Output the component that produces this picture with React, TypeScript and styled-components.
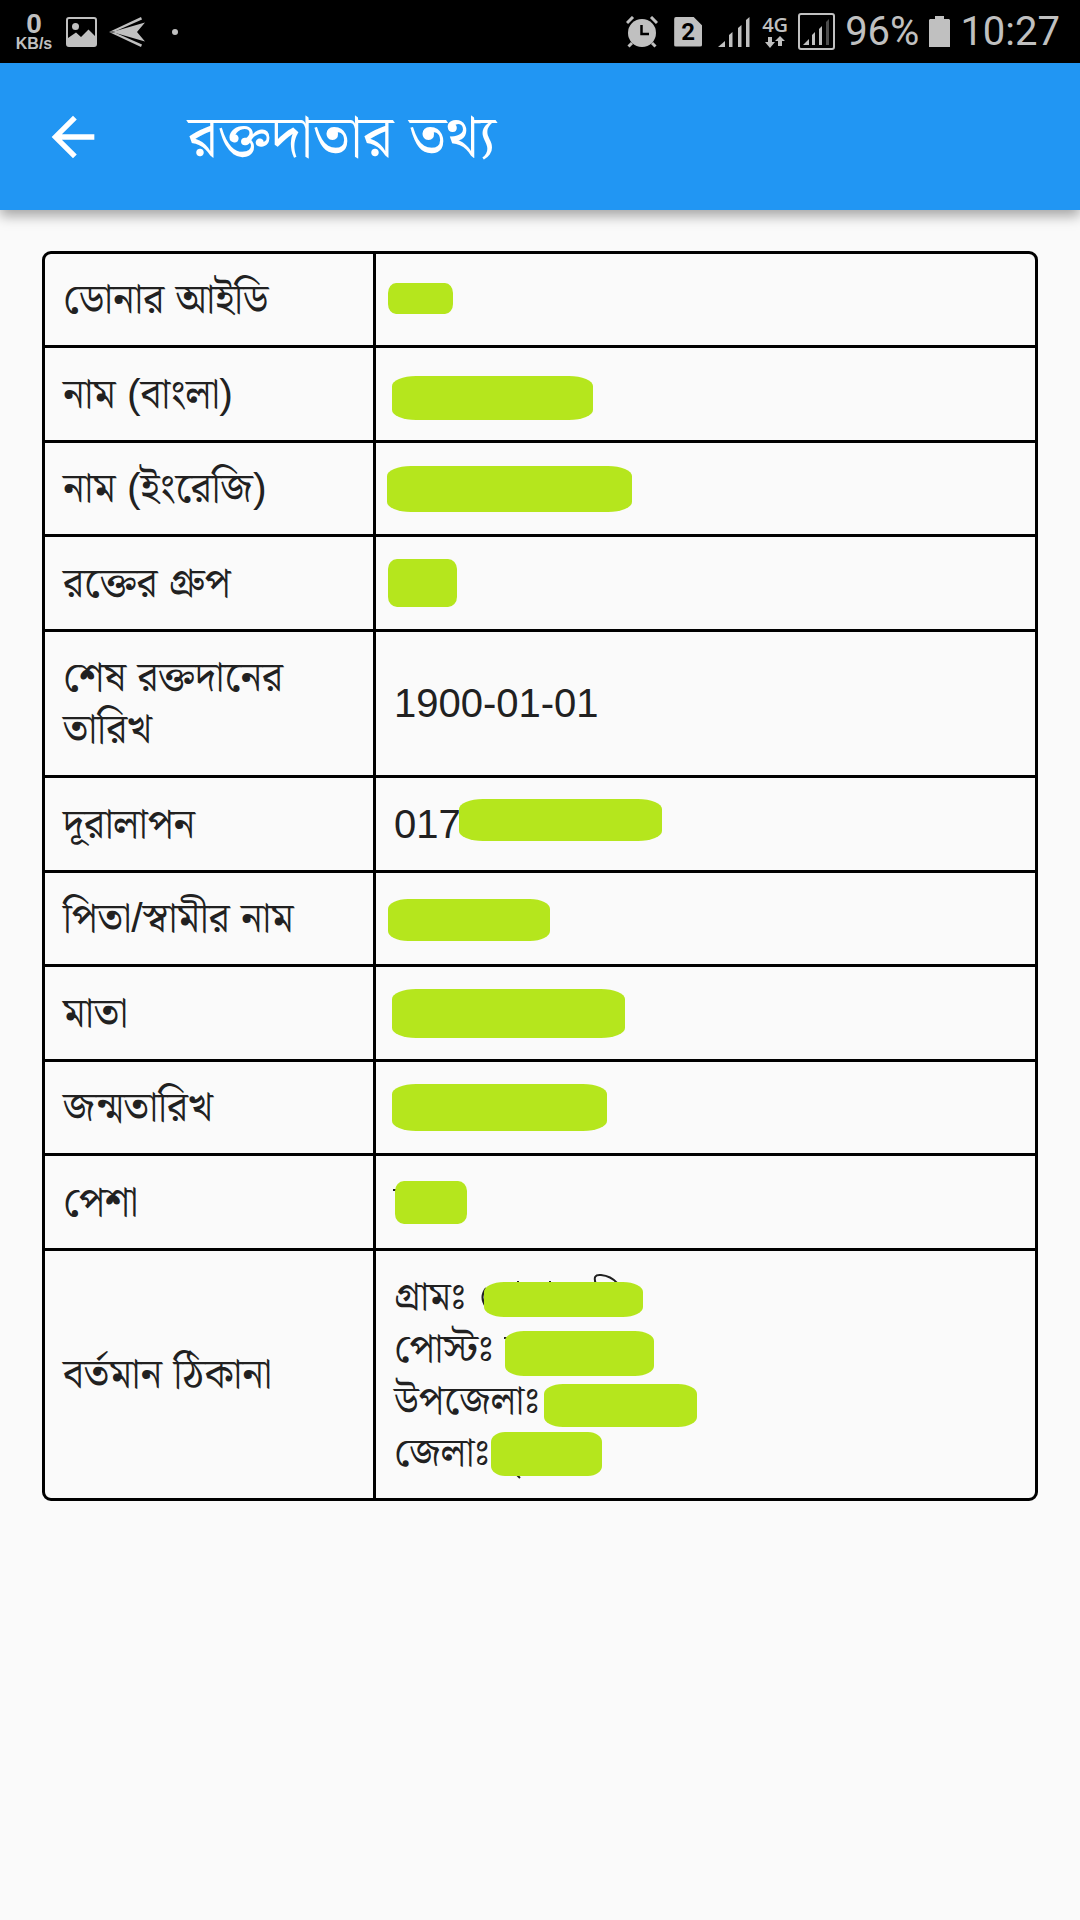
import React from "react";
import styled, { createGlobalStyle } from "styled-components";

const GlobalStyle = createGlobalStyle`
  *, *::before, *::after { box-sizing: border-box; }
  body {
    margin: 0;
    background: #fafafa;
    color: #212121;
    font-family: "Liberation Sans", "Noto Serif Bengali", "Noto Sans Bengali", sans-serif;
  }
`;

const Page = styled.div`
  display: flex;
  flex-direction: column;
  min-height: 100vh;
`;

const StatusBar = styled.header`
  display: flex;
  justify-content: space-between;
  height: 63px;
  padding: 0 20px 0 14px;
  background: #000;
  color: #c0c0c0;
  font-family: Roboto, sans-serif;
`;

const StatusGroup = styled.div<{ $gap: number }>`
  display: flex;
  align-items: center;
  gap: ${(p) => p.$gap}px;
`;

const NetSpeed = styled.div`
  display: flex;
  flex-direction: column;
  align-items: center;
  width: 40px;
  font-family: "Liberation Sans", sans-serif;
  font-weight: 700;
`;

const SpeedValue = styled.span`
  font-size: 28px;
  line-height: 24px;
`;

const SpeedUnit = styled.span`
  font-size: 16px;
  line-height: 16px;
`;

const StatusText = styled.span`
  font-size: 40px;
  line-height: 48px;
`;

const AppBar = styled.div`
  position: relative;
  display: flex;
  align-items: center;
  gap: 82px;
  height: 147px;
  padding: 0 40px;
  background: #2196f3;
  color: #fff;
  box-shadow: 0 6px 12px rgba(0, 0, 0, 0.34);
`;

const BackButton = styled.button`
  display: flex;
  align-items: center;
  justify-content: center;
  width: 66px;
  height: 66px;
  padding: 0;
  border: 0;
  background: none;
  color: inherit;
`;

const Title = styled.h1`
  margin: 0;
  font-size: 59px;
  font-weight: 400;
  line-height: 72px;
`;

const Main = styled.main`
  padding: 41px 42px;
`;

const InfoTable = styled.table`
  width: 100%;
  border: 3px solid #000;
  border-radius: 9px;
  border-spacing: 0;
  table-layout: fixed;
  line-height: 52px;
`;

const InfoRow = styled.tr`
  & > * {
    padding: 19px 18px 20px;
    text-align: left;
    font-weight: 400;
    vertical-align: middle;
  }
  &:nth-child(even) > * { padding-top: 20px; }
  &:not(:last-child) > * { border-bottom: 3px solid #000; }
`;

const Label = styled.th`
  width: 331px;
  border-right: 3px solid #000;
  font-size: 41px;
`;

const Value = styled.td`
  font-size: 40px;
`;

const Line = styled.div`
  position: relative;
  height: 52px;
  white-space: nowrap;
`;

const Mark = styled.span<{ $x: number; $y: number; $w: number; $h: number }>`
  position: absolute;
  left: ${(p) => p.$x}px;
  top: ${(p) => p.$y}px;
  width: ${(p) => p.$w}px;
  height: ${(p) => p.$h}px;
  border-radius: ${(p) => Math.min(24, Math.round(p.$w / 8))}px / 10px;
  background: #b5e61d;
`;

const StrokeLayer = styled.svg`
  position: absolute;
  left: 0;
  top: 0;
  overflow: visible;
`;

type MarkBox = [number, number, number, number];
type LineData = { text?: string; mark?: MarkBox; strokes?: string };
type RowData = { label: string; lines: LineData[] };

const rows: RowData[] = [
  { label: "ডোনার আইডি", lines: [{ mark: [-6, 10, 65, 31] }] },
  { label: "নাম (বাংলা)", lines: [{ mark: [-2, 8, 201, 44] }] },
  { label: "নাম (ইংরেজি)", lines: [{ mark: [-7, 4, 245, 46] }] },
  { label: "রক্তের গ্রুপ", lines: [{ mark: [-6, 2, 69, 48] }] },
  { label: "শেষ রক্তদানের তারিখ", lines: [{ text: "1900-01-01" }] },
  { label: "দূরালাপন", lines: [{ text: "017", mark: [65, 1, 203, 42] }] },
  { label: "পিতা/স্বামীর নাম", lines: [{ mark: [-6, 7, 162, 42] }] },
  { label: "মাতা", lines: [{ mark: [-2, 2, 233, 49] }] },
  { label: "জন্মতারিখ", lines: [{ mark: [-2, 3, 215, 47] }] },
  { label: "পেশা", lines: [{ mark: [1, 5, 72, 43], strokes: "M-1 14 H4" }] },
  {
    label: "বর্তমান ঠিকানা",
    lines: [
      {
        text: "গ্রামঃ",
        mark: [90, 12, 159, 35],
        strokes: "M92 18 Q85 27 92 37 M202 14 Q198 4 207 5 Q217 6 223 13 M124 11 V14 M156 11 V14",
      },
      { text: "পোস্টঃ", mark: [111, 9, 149, 45], strokes: "M110 16 H113" },
      { text: "উপজেলাঃ", mark: [150, 10, 153, 43] },
      { text: "জেলাঃ", mark: [97, 6, 111, 44], strokes: "M123 49 L126 52" },
    ],
  },
];

const ImageIcon = () => (
  <svg width="31" height="30" viewBox="0 0 31 30" aria-hidden="true">
    <rect x="1" y="1" width="29" height="28" rx="2" fill="none" stroke="#c0c0c0" strokeWidth="2" />
    <circle cx="9.500" cy="9.500" r="3.500" fill="#c0c0c0" />
    <path d="M2 21 L10 15.500 L15 20 L22.500 12.500 L29 19 V28 H2Z" fill="#c0c0c0" />
  </svg>
);

const PlaneIcon = () => (
  <svg width="37" height="30" viewBox="0 0 37 30" fill="#c0c0c0" aria-hidden="true">
    <path d="M0 15 L32 0 L33 2.500 L7 14Z" />
    <path d="M3 15 L36 5.500 L28 15 L36 24.500Z" />
    <path d="M0 15 L32 30 L33 27.500 L7 16Z" />
  </svg>
);

const DotIcon = () => (
  <svg width="6" height="6" viewBox="0 0 6 6" aria-hidden="true">
    <circle cx="3" cy="3" r="3" fill="#c0c0c0" />
  </svg>
);

const AlarmIcon = () => (
  <svg width="32" height="32" viewBox="0 0 32 32" aria-hidden="true">
    <circle cx="16" cy="17" r="14" fill="#c0c0c0" />
    <path d="M1 7 L7 1 M25 1 L31 7" stroke="#c0c0c0" strokeWidth="3" />
    <path d="M6 27 L2.500 30.500 M26 27 L29.500 30.500" stroke="#c0c0c0" strokeWidth="3" />
    <path d="M15.500 9 V18 H23" fill="none" stroke="#000" strokeWidth="2.500" />
  </svg>
);

const SimBadge = styled.span`
  display: flex;
  align-items: center;
  justify-content: center;
  width: 28px;
  height: 30px;
  border-radius: 2px;
  background: #c0c0c0;
  clip-path: polygon(0 0, 68% 0, 100% 30%, 100% 100%, 0 100%);
  color: #000;
  font-size: 24px;
  font-weight: 700;
  line-height: 30px;
`;

const SignalIcon = () => (
  <svg width="32" height="32" viewBox="0 0 32 32" fill="#c0c0c0" aria-hidden="true">
    <path d="M0 31 L7 25 V31Z" />
    <path d="M11 19 L14.500 16 V31 H11Z" />
    <path d="M20 12 L23.500 9 V31 H20Z" />
    <path d="M28 4 L31.500 1 V31 H28Z" />
  </svg>
);

const NetType = styled.span`
  display: flex;
  flex-direction: column;
  align-items: center;
  gap: 1px;
  font-family: "Open Sans", sans-serif;
  font-size: 20px;
  font-weight: 600;
  line-height: 20px;
`;

const DataArrows = () => (
  <svg width="20" height="12" viewBox="0 0 20 12" fill="#c0c0c0" aria-hidden="true">
    <path d="M3 1 H7 V6 H10 L5 12 L0 6 H3Z" />
    <path d="M13 10 H17 V5 H20 L15 0 L10 5 H13Z" />
  </svg>
);

const BoxedSignalIcon = () => (
  <svg width="37" height="37" viewBox="0 0 37 37" fill="#c0c0c0" aria-hidden="true">
    <rect x="1" y="1" width="35" height="35" rx="2" fill="none" stroke="#c0c0c0" strokeWidth="2" />
    <path d="M5 32 L11 26 V32Z" />
    <path d="M14 22 L17 19 V32 H14Z" />
    <path d="M21 16 L24 13 V32 H21Z" />
    <path d="M28 9 L31 6 V32 H28Z" opacity="0.4" />
  </svg>
);

const BatteryIcon = () => (
  <svg width="21" height="31" viewBox="0 0 21 31" fill="#c0c0c0" aria-hidden="true">
    <path d="M6 0 H15 V3 H20 L21 4 V31 H0 V4 L1 3 H6Z" />
  </svg>
);

const BackIcon = () => (
  <svg width="64" height="64" viewBox="0 0 24 24" fill="currentColor" aria-hidden="true">
    <path d="M20 11H7.830l5.590-5.590L12 4l-8 8 8 8 1.410-1.410L7.830 13H20v-2z" />
  </svg>
);

export default function App() {
  return (
    <Page>
      <GlobalStyle />
      <StatusBar>
        <StatusGroup $gap={26}>
          <StatusGroup $gap={12}>
            <NetSpeed>
              <SpeedValue>0</SpeedValue>
              <SpeedUnit>KB/s</SpeedUnit>
            </NetSpeed>
            <ImageIcon />
            <PlaneIcon />
          </StatusGroup>
          <DotIcon />
        </StatusGroup>
        <StatusGroup $gap={10}>
          <StatusGroup $gap={12}>
            <StatusGroup $gap={16}>
              <AlarmIcon />
              <SimBadge>2</SimBadge>
              <SignalIcon />
            </StatusGroup>
            <NetType>
              4G
              <DataArrows />
            </NetType>
          </StatusGroup>
          <BoxedSignalIcon />
          <StatusText>96%</StatusText>
          <BatteryIcon />
          <StatusText>10:27</StatusText>
        </StatusGroup>
      </StatusBar>
      <AppBar>
        <BackButton type="button" aria-label="Back">
          <BackIcon />
        </BackButton>
        <Title>রক্তদাতার তথ্য</Title>
      </AppBar>
      <Main>
        <InfoTable>
          <tbody>
            {rows.map((row) => (
              <InfoRow key={row.label}>
                <Label scope="row">{row.label}</Label>
                <Value>
                  {row.lines.map((line, i) => (
                    <Line key={i}>
                      {line.text}
                      {line.strokes && (
                        <StrokeLayer width="1" height="1" aria-hidden="true">
                          <path d={line.strokes} fill="none" stroke="#212121" strokeWidth="2" />
                        </StrokeLayer>
                      )}
                      {line.mark && (
                        <Mark $x={line.mark[0]} $y={line.mark[1]} $w={line.mark[2]} $h={line.mark[3]} />
                      )}
                    </Line>
                  ))}
                </Value>
              </InfoRow>
            ))}
          </tbody>
        </InfoTable>
      </Main>
    </Page>
  );
}
